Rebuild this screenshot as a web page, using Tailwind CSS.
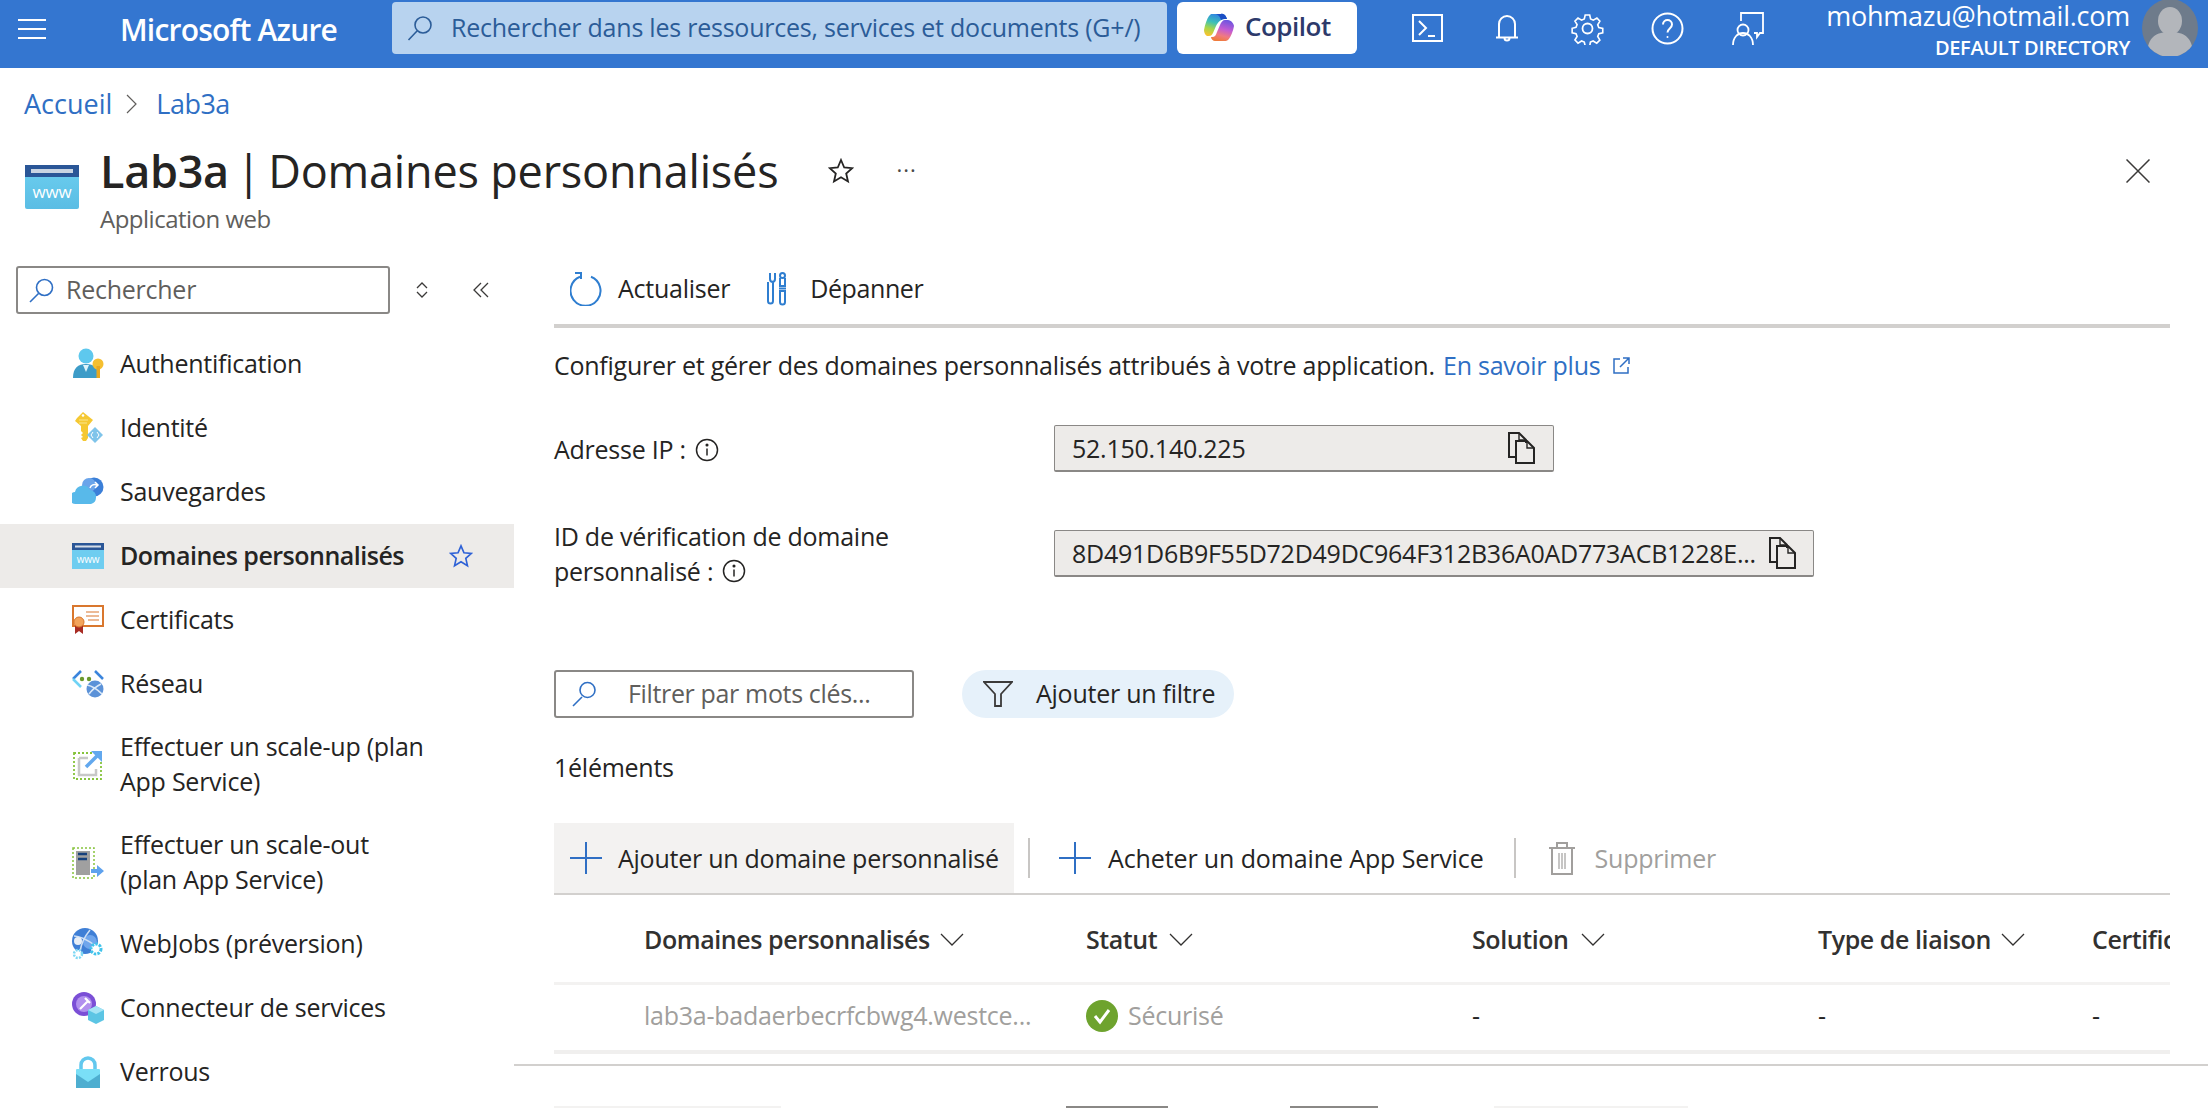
<!DOCTYPE html>
<html lang="fr">
<head>
<meta charset="utf-8">
<script src="https://cdn.jsdelivr.net/npm/@tailwindcss/browser@4"></script>
<title>Lab3a</title>
</head>
<body class="[font-family:'Open_Sans',sans-serif] bg-white text-[#252423] text-[25px] tracking-[-0.25px] h-[1108px] overflow-hidden">
<header class="h-[68px] bg-[#3476d0] flex items-start text-white relative">
  <svg class="w-[28px] h-[22px] ml-[18px] mt-[18px] shrink-0" viewBox="0 0 28 22" stroke="#fff" stroke-width="2"><path d="M0 2h28M0 11h28M0 20h28"/></svg>
  <div class="ml-[74px] w-[272px] h-[58px] text-[30px] font-semibold tracking-[-0.8px] leading-[60px] shrink-0">Microsoft Azure</div>
  <div class="w-[775px] h-[52px] mt-[2px] bg-[#b8d3ef] rounded-[4px] flex items-center shrink-0 text-[#2b5c98]">
    <svg class="w-[26px] h-[26px] ml-[15px] shrink-0" viewBox="0 0 26 26" fill="none" stroke="#2b5c98" stroke-width="1.6"><circle cx="16" cy="10" r="8"/><path d="M10 16 1.5 25"/></svg>
    <span class="ml-[18px] text-[25px] tracking-[-0.23px] whitespace-nowrap">Rechercher dans les ressources, services et documents (G+/)</span>
  </div>
  <div class="ml-[10px] w-[180px] h-[52px] mt-[2px] bg-white rounded-[6px] flex items-center shrink-0">
    <svg class="w-[30px] h-[28px] ml-[27px] -mt-[2px] shrink-0" viewBox="0 0 30 28"><defs><linearGradient id="cpa" x1="0.6" y1="0" x2="0.3" y2="1"><stop offset="0" stop-color="#2f7fe6"/><stop offset=".4" stop-color="#3cc0b8"/><stop offset=".7" stop-color="#a6d64a"/><stop offset="1" stop-color="#f6c330"/></linearGradient><linearGradient id="cpb" x1="0.7" y1="0" x2="0.4" y2="1"><stop offset="0" stop-color="#6a55e0"/><stop offset=".45" stop-color="#c45cd2"/><stop offset=".75" stop-color="#f07a80"/><stop offset="1" stop-color="#ef7b3c"/></linearGradient></defs><path d="M7 1H17C20 0 22 3 23 6H21C17 6 14 9 12 13L9 20C8 22 7 23 5 23H3C1 22 0 19 0 17C1 11 3 6 5 3Z" fill="url(#cpa)"/><path d="M12 1H17C20 0 22 3 23 6H21C19 6 18 6.500 17 7C16 4 15 2 12 1Z" fill="#1c4fc4"/><path d="M21 7H24C27 7 30 11 30 13C29 18 27 24 24 27C23 28 21 28 19 28H11C9 28 7 26 7 24H8C11 24 12 22 13 19L16 12C17 9 19 7 21 7Z" fill="url(#cpb)"/></svg>
    <span class="ml-[11px] -mt-[3px] text-[#2d3a6b] font-semibold text-[26px] tracking-[-0.5px]">Copilot</span>
  </div>
  <div class="relative shrink-0 w-[851px] h-[68px]">
    <svg class="absolute left-[55px] top-[14px] w-[31px] h-[28px]" viewBox="0 0 31 28" fill="none" stroke="#fff" stroke-width="2"><rect x="1" y="1" width="29" height="26"/><path d="M7 7l7 7-7 7M16 22h7"/></svg>
    <svg class="absolute left-[138px] top-[14px] w-[24px] h-[30px]" viewBox="0 0 24 30" fill="none" stroke="#fff" stroke-width="2"><path d="M4 23V10a8 8 0 0 1 16 0v13M1 23.500h22M9.500 24a2.500 2.500 0 0 0 5 0"/></svg>
    <svg class="absolute left-[214px] top-[12px] w-[33px] h-[33px]" viewBox="0 0 33 33" fill="none" stroke="#fff" stroke-width="1.800"><circle cx="16.500" cy="16.500" r="5"/><path d="M14 1.500h5l1 4.500 3 1.300 4-2.400 3.300 3.500-2.400 4 1.200 3 4.400 1v5l-4.400 1-1.200 3 2.400 4-3.500 3.400-4-2.400-3 1.200-.8 4.500h-5l-1-4.500-3-1.200-4 2.400-3.400-3.500 2.400-4-1.200-3-4.300-1v-5l4.300-1 1.200-3-2.400-4L6 4.900l4 2.400 3-1.300Z" transform="translate(1.600 1.600) scale(.9)"/></svg>
    <svg class="absolute left-[294px] top-[12px] w-[33px] h-[33px]" viewBox="0 0 33 33" fill="none" stroke="#fff" stroke-width="2"><circle cx="16.500" cy="16.500" r="15"/><path d="M12 12.500c0-6 9-6 9 0 0 4-4.500 4-4.500 8"/><circle cx="16.500" cy="25" r="1" fill="#fff" stroke="none"/></svg>
    <svg class="absolute left-[375px] top-[12px] w-[32px] h-[33px]" viewBox="0 0 32 33" fill="none" stroke="#fff" stroke-width="1.800"><path d="M9 9V1h22v20h-3l-3 4v-4h-3"/><circle cx="11" cy="18" r="5.500"/><path d="M1 33c0-16 20-16 20 0"/></svg>
  </div>
  <div class="absolute right-[78px] top-0 text-right">
    <div class="text-[27px] leading-[32px] tracking-[-0.25px] whitespace-nowrap">mohmazu@hotmail.com</div>
    <div class="text-[20px] leading-[32px] font-semibold tracking-[-0.35px] whitespace-nowrap">DEFAULT DIRECTORY</div>
  </div>
  <svg class="absolute left-[2142px] top-0 w-[56px] h-[56px]" viewBox="0 0 56 56"><defs><clipPath id="avc"><ellipse cx="28" cy="28" rx="28" ry="29"/></clipPath></defs><g clip-path="url(#avc)"><rect width="56" height="56" fill="#6e7b8b"/><ellipse cx="28" cy="21" rx="12" ry="14" fill="#b3b6bb"/><path d="M5 56c0-20 10-24 23-24s23 4 23 24Z" fill="#b3b6bb"/></g></svg>
</header>

<nav class="h-[74px] pl-[24px] flex items-center text-[#2f6fc4] text-[27px] tracking-normal -mt-px">
  <span>Accueil</span>
  <svg class="w-[12px] h-[20px] ml-[14px] mr-[18px] shrink-0" viewBox="0 0 12 20" fill="none" stroke="#605e5c" stroke-width="1.200"><path d="M1 1l9 9-9 9"/></svg>
  <span class="tracking-[-0.5px]">Lab3a</span>
</nav>

<section class="h-[99px] flex relative">
  <svg class="ml-[25px] mt-[24px] w-[54px] h-[44px] shrink-0" viewBox="0 0 54 44"><defs><linearGradient id="www" x1="0" y1="0" x2="0" y2="1"><stop offset="0" stop-color="#6ccff0"/><stop offset="1" stop-color="#5bbde4"/></linearGradient></defs><rect y="0" width="54" height="44" rx="2" fill="url(#www)"/><rect width="54" height="12" fill="#2a5697"/><rect x="6" y="4" width="42" height="4" fill="#c9d4e2"/><text x="27" y="33" text-anchor="middle" font-size="17" fill="#fff" font-family="Open Sans">www</text></svg>
  <div class="ml-[21px] pt-[1px] flex flex-col">
    <div class="h-[58px] flex items-center">
      <h1 class="text-[45px] leading-[58px] whitespace-nowrap"><span class="font-semibold tracking-[-0.3px]">Lab3a</span><span class="[word-spacing:-4px]"> | </span><span class="tracking-[-0.2px]">Domaines personnalisés</span></h1>
      <svg class="ml-[50px] w-[26px] h-[26px] shrink-0" viewBox="0 0 26 26" fill="none" stroke="#252423" stroke-width="1.800"><path d="M13 2l3.200 7.500 8 .7-6 5.300 1.800 8-7-4.200-7 4.200 1.800-8-6-5.300 8-.7Z"/></svg>
      <span class="ml-[42px] text-[#4a4a4a] text-[22px] leading-none -mt-[4px] tracking-[1px]">···</span>
    </div>
    <div class="h-[40px] text-[24px] tracking-[-0.5px] text-[#605e5c] leading-[38px]">Application web</div>
  </div>
  <svg class="absolute left-[2126px] top-[18px] w-[24px] h-[24px]" viewBox="0 0 24 24" fill="none" stroke="#3b3a39" stroke-width="1.500"><path d="M.5.500l23 23M23.500.500l-23 23"/></svg>
</section>

<div class="flex h-[868px]">
  <aside class="w-[514px] shrink-0 pt-[26px]">
    <div class="flex items-center h-[48px] mb-[18px]">
      <div class="ml-[16px] w-[374px] h-[48px] border-2 border-[#8a8886] rounded-[3px] flex items-center">
        <svg class="ml-[11px] w-[25px] h-[25px] shrink-0" viewBox="0 0 25 25" fill="none" stroke="#2f6fc4" stroke-width="1.600"><circle cx="15.500" cy="9.500" r="8"/><path d="M9.500 15.500 1 24"/></svg>
        <span class="ml-[12px] text-[#605e5c]">Rechercher</span>
      </div>
      <svg class="ml-[25px] w-[14px] h-[18px]" viewBox="0 0 14 18" fill="none" stroke="#3b3a39" stroke-width="1.300"><path d="M2 7l5-5 5 5M2 11l5 5 5-5"/></svg>
      <svg class="ml-[44px] w-[16px] h-[16px]" viewBox="0 0 16 16" fill="none" stroke="#3b3a39" stroke-width="1.300"><path d="M8 1 1 8l7 7M15 1 8 8l7 7"/></svg>
    </div>
    <ul>
      <li class="h-16 flex items-center"><svg class="ml-[72px] w-[32px] h-[32px] shrink-0" viewBox="0 0 32 32"><circle cx="14" cy="8" r="7.500" fill="#5ec8ee"/><path d="M1 30c0-10 5-14 13-14s13 4 13 14Z" fill="#3d9cc8"/><path d="M11 17h6l-3 7Z" fill="#dff4fb"/><circle cx="26" cy="16" r="5.500" fill="#f5bf30"/><rect x="24.500" y="18" width="3.500" height="12" fill="#e8a820"/></svg><span class="ml-[16px]">Authentification</span></li>
      <li class="h-16 flex items-center"><svg class="ml-[72px] w-[32px] h-[32px] shrink-0" viewBox="0 0 32 32"><path d="M11 0l10 8-5 6v12l-2 3h-3l-2-3 2-1-2-2 2-2-2-2v-5L3 9l2-3Z" fill="#f5c832"/><circle cx="11" cy="3.500" r="1.300" fill="#fff"/><path d="M7 8h9M7 11h8" stroke="#fbe68c" stroke-width="1.200"/><path d="M23 15l8 8-8 8-8-8Z" fill="#7fc4ea"/><path d="M21 20l-2 3 2 3M25 20l2 3-2 3" stroke="#fff" fill="none"/></svg><span class="ml-[16px]">Identité</span></li>
      <li class="h-16 flex items-center"><svg class="ml-[72px] w-[32px] h-[32px] shrink-0" viewBox="0 0 32 32"><circle cx="22" cy="11" r="9.500" fill="#3b7fd8"/><circle cx="17" cy="9" r="7" fill="#6aa4ea"/><path d="M4 28a6 6 0 0 1-1-12 8 8 0 0 1 15-2 6.500 6.500 0 0 1 6 7 7 7 0 0 1-5 7Z" fill="#58b9ea"/><path d="M18 12c1-3 4-4 7-3M23 6l3 3-3 3" stroke="#fff" stroke-width="1.500" fill="none"/></svg><span class="ml-[16px]">Sauvegardes</span></li>
      <li class="h-16 flex items-center bg-[#edebe9] relative"><svg class="ml-[72px] w-[32px] h-[26px] shrink-0" viewBox="0 0 32 26"><rect width="32" height="26" fill="#6fcdf0"/><rect width="32" height="7" fill="#2a5697"/><rect x="3" y="2.500" width="26" height="2" fill="#d5dde8"/><text x="16" y="20" text-anchor="middle" font-size="10" fill="#fff" font-family="Open Sans">www</text></svg><span class="ml-[16px] font-semibold tracking-[-0.5px]">Domaines personnalisés</span><svg class="absolute left-[449px] top-[20px] w-[24px] h-[24px]" viewBox="0 0 26 26" fill="none" stroke="#2f62d6" stroke-width="1.800"><path d="M13 2l3.200 7.500 8 .7-6 5.300 1.800 8-7-4.200-7 4.200 1.800-8-6-5.300 8-.7Z"/></svg></li>
      <li class="h-16 flex items-center"><svg class="ml-[72px] w-[32px] h-[30px] shrink-0" viewBox="0 0 32 30"><rect x="1" y="1" width="30" height="20" fill="#fff" stroke="#d9772e" stroke-width="2"/><path d="M14 7h13M14 11h13M16 15h11" stroke="#d9772e" stroke-width="1.200"/><path d="M3 19h8v10l-4-3-4 3Z" fill="#a82c24"/><circle cx="7" cy="17" r="5" fill="#f2a45c" stroke="#d9772e"/></svg><span class="ml-[16px]">Certificats</span></li>
      <li class="h-16 flex items-center"><svg class="ml-[72px] w-[32px] h-[30px] shrink-0" viewBox="0 0 32 30"><path d="M9 2 1 10" stroke="#3b85dc" stroke-width="2.500"/><path d="M1 10l8 8" stroke="#6fd3f5" stroke-width="2.500"/><path d="M23 2l8 8" stroke="#3b85dc" stroke-width="2.500"/><circle cx="10" cy="10" r="2.200" fill="#6b9a2d"/><circle cx="17" cy="10" r="2.200" fill="#6b9a2d"/><circle cx="23" cy="20" r="8.500" fill="#5b92d8"/><path d="M15 16c5 1 11 5 15 9M17 25c3-4 8-8 12-10" stroke="#dbe9f8" stroke-width="1.600" fill="none"/></svg><span class="ml-[16px]">Réseau</span></li>
      <li class="h-[98px] flex items-center"><svg class="ml-[73px] w-[30px] h-[30px] shrink-0" viewBox="0 0 30 30" fill="none"><rect x="1" y="3" width="27" height="26" stroke="#86c43c" stroke-width="1.800" stroke-dasharray="2 2"/><path d="M6 8v17h17v-6M6 8h9" stroke="#c8c8c8" stroke-width="2.500"/><path d="M13 17 26 4" stroke="#62a8ee" stroke-width="3.500"/><path d="M18 1h11v11Z" fill="#62a8ee"/></svg><span class="ml-[17px] leading-[35px] -mt-[2px]">Effectuer un scale-up (plan<br>App Service)</span></li>
      <li class="h-[98px] flex items-center"><svg class="ml-[72px] w-[32px] h-[32px] shrink-0" viewBox="0 0 32 32" fill="none"><rect x="1" y="1" width="21" height="30" stroke="#86c43c" stroke-width="1.500" stroke-dasharray="2 2"/><rect x="4" y="4" width="14" height="24" fill="#a0a0a0"/><path d="M6 7h9M6 12h9" stroke="#17417c" stroke-width="2.500"/><path d="M19 22h6v-4l7 6-7 6v-4h-6Z" fill="#5ea2ee"/></svg><span class="ml-[16px] leading-[35px] -mt-[2px]">Effectuer un scale-out<br>(plan App Service)</span></li>
      <li class="h-16 flex items-center"><svg class="ml-[72px] w-[32px] h-[32px] shrink-0" viewBox="0 0 32 32"><circle cx="13" cy="13" r="13" fill="#3f7fd6"/><circle cx="18" cy="14" r="7" fill="#70a6ec"/><path d="M2 8c7 0 15 5 22 10M8 24c1-8 5-16 10-22" stroke="#cfe0f5" stroke-width="1.500" fill="none"/><circle cx="6" cy="13" r="4" fill="#e8eef6"/><circle cx="24" cy="21" r="5" fill="#fff" stroke="#42c4ec" stroke-width="3" stroke-dasharray="2.500 1.200"/><circle cx="6" cy="26" r="4" fill="#fff" stroke="#7ed8f4" stroke-width="2.500" stroke-dasharray="2 1.200"/></svg><span class="ml-[16px]">WebJobs (préversion)</span></li>
      <li class="h-16 flex items-center"><svg class="ml-[72px] w-[32px] h-[32px] shrink-0" viewBox="0 0 32 32"><circle cx="12" cy="12" r="12" fill="#7b4fd6"/><circle cx="12" cy="12" r="8" fill="#b190ee"/><path d="M8 17l8-8M13 6l3 3M18 11l-3-3" stroke="#fff" stroke-width="2.200"/><path d="M24 14l8 4v10l-8 4-8-4V18Z" fill="#5cc5e4"/><path d="M24 22l8-4-8-4-8 4Z" fill="#a5e4f5"/></svg><span class="ml-[16px]">Connecteur de services</span></li>
      <li class="h-16 flex items-center"><svg class="ml-[76px] w-[24px] h-[32px] shrink-0" viewBox="0 0 24 32"><path d="M5 15V9a7 7 0 0 1 14 0v6" fill="none" stroke="#62c8ee" stroke-width="3.500"/><rect y="13" width="24" height="19" rx="1" fill="#7adff7"/><path d="M0 18l12 8 12-8v14H0Z" fill="#4eaed0"/></svg><span class="ml-[20px]">Verrous</span></li>
    </ul>
  </aside>

  <main class="flex-1 min-w-0">
    <div class="pl-[40px] pr-[38px]">
      <div class="h-[88px] pt-[14px] flex items-center border-b-4 border-[#d2d0ce]">
        <svg class="ml-[16px] w-[32px] h-[34px] shrink-0" viewBox="0 0 32 34" fill="none" stroke="#2f7ed0" stroke-width="2"><path d="M21 4.800a15 15 0 1 1-11 0"/><path d="M5 1h6v6"/></svg>
        <span class="ml-[16px]">Actualiser</span>
        <svg class="ml-[37px] w-[20px] h-[34px] shrink-0" viewBox="0 0 20 34" fill="none" stroke="#2f7ed0" stroke-width="2"><path d="M3 1v6a3 3 0 0 0 3 3v19a2.500 2.500 0 0 1-5 0V10M8 1v6a3 3 0 0 1-3 3"/><rect x="13" y="1" width="5" height="5" rx="2.500"/><path d="M13 6v8h5V6M13 19h5v11a2.500 2.500 0 0 1-5 0Z"/><path d="M12 16.500h7"/></svg>
        <span class="ml-[23px] tracking-[-0.4px]">Dépanner</span>
      </div>
      <p class="h-[36px] mt-[19px] leading-[36px] flex items-center whitespace-nowrap">Configurer et gérer des domaines personnalisés attribués à votre application.&nbsp;<span class="text-[#2f6fc4] ml-[2px]">En savoir plus</span><svg class="ml-[13px] w-[17px] h-[17px]" viewBox="0 0 17 17" fill="none" stroke="#2f6fc4" stroke-width="1.500"><path d="M7 2H1v14h14v-6M10 1h6v6M16 1 7 10"/></svg></p>

      <div class="mt-[42px] h-[47px] flex items-center">
        <div class="w-[500px] pt-[3px] flex items-center">Adresse IP :<svg class="ml-[9px] w-[24px] h-[24px]" viewBox="0 0 24 24" fill="none" stroke="#252423" stroke-width="1.500"><circle cx="12" cy="12" r="10.500"/><path d="M12 10.500v7"/><circle cx="12" cy="7" r=".8" fill="#252423"/></svg></div>
        <div class="w-[500px] h-[47px] bg-[#edebe9] border border-[#8a8886] border-b-2 rounded-[2px] flex items-center pl-[17px] pr-[17px] justify-between">
          <span class="pt-[2px]">52.150.140.225</span>
          <svg class="w-[28px] h-[32px] shrink-0" viewBox="0 0 28 32" fill="none" stroke="#252423" stroke-width="2"><path d="M8 25H1V1h10l7 7v3"/><path d="M8 9h11l7 7v15H8Z"/><path d="M11 1v7h7M19 9v7h7" stroke-width="1.400"/></svg>
        </div>
      </div>

      <div class="mt-[58px] h-[47px] flex items-center">
        <div class="w-[500px] leading-[35px] flex flex-col"><span>ID de vérification de domaine</span><span class="flex items-center">personnalisé :<svg class="ml-[9px] w-[24px] h-[24px]" viewBox="0 0 24 24" fill="none" stroke="#252423" stroke-width="1.500"><circle cx="12" cy="12" r="10.500"/><path d="M12 10.500v7"/><circle cx="12" cy="7" r=".8" fill="#252423"/></svg></span></div>
        <div class="w-[760px] h-[47px] bg-[#edebe9] border border-[#8a8886] border-b-2 rounded-[2px] flex items-center pl-[17px] pr-[16px] justify-between">
          <span class="whitespace-nowrap pt-[2px]">8D491D6B9F55D72D49DC964F312B36A0AD773ACB1228E...</span>
          <svg class="w-[28px] h-[32px] shrink-0" viewBox="0 0 28 32" fill="none" stroke="#252423" stroke-width="2"><path d="M8 25H1V1h10l7 7v3"/><path d="M8 9h11l7 7v15H8Z"/><path d="M11 1v7h7M19 9v7h7" stroke-width="1.400"/></svg>
        </div>
      </div>

      <div class="mt-[93px] h-[48px] flex items-center">
        <div class="w-[360px] h-[48px] border-2 border-[#8a8886] rounded-[3px] flex items-center">
          <svg class="ml-[15px] w-[26px] h-[26px] shrink-0" viewBox="0 0 26 26" fill="none" stroke="#2f6fc4" stroke-width="1.600"><circle cx="16.500" cy="9" r="7.500"/><path d="M11 16 2 25"/></svg>
          <span class="ml-[31px] text-[#605e5c] tracking-[-0.35px]">Filtrer par mots clés...</span>
        </div>
        <div class="ml-[48px] w-[272px] h-[48px] bg-[#e6f1fa] rounded-[24px] flex items-center">
          <svg class="ml-[21px] w-[30px] h-[26px] shrink-0" viewBox="0 0 30 26" fill="none" stroke="#3b3a39" stroke-width="1.800"><path d="M1 1h28L18 13v12h-6V13Z"/></svg>
          <span class="ml-[23px]">Ajouter un filtre</span>
        </div>
      </div>

      <div class="mt-[31px] h-[36px] leading-[36px]">1éléments</div>

      <div class="mt-[38px] h-[72px] flex items-center border-b-2 border-[#d2d0ce]">
        <div class="w-[460px] h-[70px] bg-[#f3f2f1] flex items-center shrink-0">
          <svg class="ml-[16px] w-[32px] h-[32px] shrink-0" viewBox="0 0 32 32" stroke="#2f6fc4" stroke-width="2"><path d="M16 0v32M0 16h32"/></svg>
          <span class="ml-[16px] pt-[1px] whitespace-nowrap">Ajouter un domaine personnalisé</span>
        </div>
        <div class="ml-[14px] w-[2px] h-[40px] bg-[#c8c6c4] shrink-0"></div>
        <svg class="ml-[29px] w-[32px] h-[32px] shrink-0" viewBox="0 0 32 32" stroke="#2f6fc4" stroke-width="2"><path d="M16 0v32M0 16h32"/></svg>
        <span class="ml-[17px] pt-[1px] whitespace-nowrap tracking-[-0.12px]">Acheter un domaine App Service</span>
        <div class="ml-[30px] w-[2px] h-[40px] bg-[#c8c6c4] shrink-0"></div>
        <svg class="ml-[33px] w-[26px] h-[33px] shrink-0" viewBox="0 0 26 33" fill="none" stroke="#a19f9d" stroke-width="2"><path d="M0 6h26M8 6V1h10v5M3 6v26h20V6"/><path d="M10 11v16M13 11v16M16 11v16" stroke-width="1.200"/></svg>
        <span class="ml-[20px] pt-[1px] text-[#a19f9d] whitespace-nowrap">Supprimer</span>
      </div>

      <div class="h-[90px] pt-[2px] flex items-center border-b-[3px] border-[#f3f2f1] overflow-hidden font-semibold tracking-[-0.42px] text-[#323130] whitespace-nowrap">
        <div class="pl-[90px] w-[532px] shrink-0 flex items-center">Domaines personnalisés<svg class="ml-[10px] w-[24px] h-[14px]" viewBox="0 0 24 14" fill="none" stroke="#323130" stroke-width="1.300"><path d="M1 1l11 11L23 1"/></svg></div>
        <div class="w-[386px] shrink-0 flex items-center">Statut<svg class="ml-[12px] w-[24px] h-[14px]" viewBox="0 0 24 14" fill="none" stroke="#323130" stroke-width="1.300"><path d="M1 1l11 11L23 1"/></svg></div>
        <div class="w-[346px] shrink-0 flex items-center">Solution<svg class="ml-[12px] w-[24px] h-[14px]" viewBox="0 0 24 14" fill="none" stroke="#323130" stroke-width="1.300"><path d="M1 1l11 11L23 1"/></svg></div>
        <div class="w-[274px] shrink-0 flex items-center">Type de liaison<svg class="ml-[10px] w-[24px] h-[14px]" viewBox="0 0 24 14" fill="none" stroke="#323130" stroke-width="1.300"><path d="M1 1l11 11L23 1"/></svg></div>
        <div class="shrink-0">Certificat</div>
      </div>

      <div class="h-[69px] pb-[3px] flex items-center border-b-4 border-[#f0efee] whitespace-nowrap">
        <div class="pl-[90px] w-[532px] shrink-0 text-[#a19f9d]">lab3a-badaerbecrfcbwg4.westce...</div>
        <div class="w-[386px] shrink-0 flex items-center text-[#a19f9d]"><svg class="w-[32px] h-[32px] shrink-0" viewBox="0 0 32 32"><circle cx="16" cy="16" r="16" fill="#6ea32e"/><path d="M9 16l5 6 9-12" fill="none" stroke="#fff" stroke-width="3"/></svg><span class="ml-[10px]">Sécurisé</span></div>
        <div class="w-[346px] shrink-0">-</div>
        <div class="w-[274px] shrink-0">-</div>
        <div class="shrink-0">-</div>
      </div>
    </div>
    <div class="mt-[10px] h-[2px] bg-[#d2d0ce]"></div>
    <div class="mt-[40px] pl-[40px] flex">
      <div class="w-[227px] h-[4px] bg-[#f3f2f1] shrink-0"></div>
      <div class="ml-[285px] w-[102px] h-[4px] bg-[#8a8886] shrink-0"></div>
      <div class="ml-[122px] w-[88px] h-[4px] bg-[#8a8886] shrink-0"></div>
      <div class="ml-[116px] w-[194px] h-[4px] bg-[#f3f2f1] shrink-0"></div>
    </div>
  </main>
</div>
</body>
</html>
